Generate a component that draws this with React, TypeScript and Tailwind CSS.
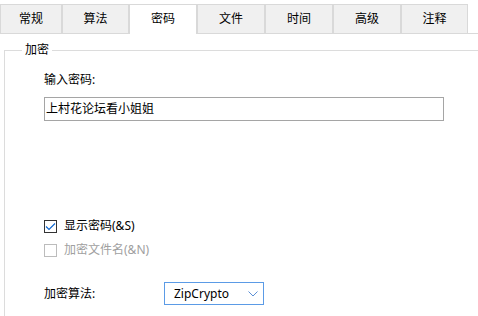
import React from 'react';

const tabs = [
  { label: '常规', width: 'w-[62px]' },
  { label: '算法', width: 'w-[67px]' },
  { label: '密码', width: 'w-[68px]', active: true },
  { label: '文件', width: 'w-[68px]' },
  { label: '时间', width: 'w-[68px]' },
  { label: '高级', width: 'w-[68px]' },
  { label: '注释', width: 'w-[67px]' },
];

function CheckBox({ checked, disabled }: { checked?: boolean; disabled?: boolean }) {
  return (
    <span
      className={`flex h-[13px] w-[13px] shrink-0 items-center justify-center border bg-white ${
        disabled ? 'border-[#bcbcbc]' : 'border-[#333333]'
      }`}
    >
      {checked && (
        <svg width="11" height="11" viewBox="0 0 11 11" fill="none">
          <path d="M1 5.5 L4 8.5 L10 2.5" stroke="#0a64d0" strokeWidth="1.1" />
        </svg>
      )}
    </span>
  );
}

export default function App() {
  return (
    <div className="h-[316px] w-[478px] overflow-hidden bg-white font-['Noto_Sans','Noto_Sans_CJK_SC',sans-serif] text-[12px] leading-[16px] text-black">
      {/* Tabs */}
      <div className="flex h-[34px] border-b border-[#d9d9d9] pt-[4px]">
        {tabs.map(tab =>
          tab.active ? (
            <div
              key={tab.label}
              className={`${tab.width} relative -mb-px flex h-[30px] shrink-0 items-center justify-center border border-b-0 border-[#d9d9d9] bg-white pb-px`}
            >
              {tab.label}
            </div>
          ) : (
            <div
              key={tab.label}
              className={`${tab.width} flex h-[29px] shrink-0 items-center justify-center border border-b-0 border-[#d9d9d9] bg-[#f0f0f0]`}
            >
              {tab.label}
            </div>
          )
        )}
      </div>

      {/* Group box */}
      <fieldset className="ml-[4px] mt-[8px] h-[300px] w-[500px] border border-[#dcdcdc]">
        <legend className="ml-[17px] px-[3px]">加密</legend>

        <div className="pl-[39px]">
          <div className="pt-[14px]">输入密码:</div>

          <div className="mt-[9px] flex h-[24px] w-[400px] items-center border border-[#a5a5a5] pl-[1px]">
            上村花论坛看小姐姐
          </div>

          <div className="mt-[97px] flex h-[16px] items-center">
            <CheckBox checked />
            <span className="ml-[7px]">显示密码(&amp;S)</span>
          </div>

          <div className="mt-[8px] flex h-[16px] items-center">
            <CheckBox disabled />
            <span className="ml-[7px] text-[#a0a0a0]">加密文件名(&amp;N)</span>
          </div>

          <div className="mt-[24px] flex items-center">
            <span className="w-[120px]">加密算法:</span>
            <div className="flex h-[23px] w-[100px] items-center justify-between border border-[#5b9be6] pl-[9px] pr-[5px]">
              <span>ZipCrypto</span>
              <svg width="10" height="6" viewBox="0 0 10 6" fill="none">
                <path d="M0.5 0.5 L5 5 L9.5 0.5" stroke="#5a8fd6" strokeWidth="1" />
              </svg>
            </div>
          </div>
        </div>
      </fieldset>
    </div>
  );
}
